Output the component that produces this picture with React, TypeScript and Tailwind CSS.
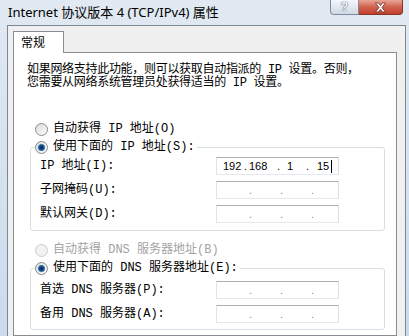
import React from "react";

const simsun = "font-['Liberation_Mono','Noto_Sans_CJK_SC',monospace]";

function Radio({ checked, disabled }: { checked?: boolean; disabled?: boolean }) {
  return (
    <span
      className={`flex h-[13px] w-[13px] shrink-0 items-center justify-center rounded-full border ${
        disabled
          ? "border-[#c9cbcd] bg-[#f2f2f2]"
          : "border-[#8a8c8e] bg-gradient-to-br from-[#dcdcdc] to-[#fbfbfb]"
      }`}
    >
      {checked && (
        <span className="h-[7px] w-[7px] rounded-full bg-[radial-gradient(circle,#0b2548_0%,#174f8c_45%,#6fb2ea_100%)]" />
      )}
    </span>
  );
}

function IpBox({ filled }: { filled?: boolean }) {
  const box =
    "flex h-[18px] w-[123px] shrink-0 items-center border border-[#abadb3] border-l-[#e2e3ea] border-r-[#dbdfe6] border-b-[#e3e9ef] bg-white font-['Liberation_Sans',sans-serif] text-[11px] leading-none";

  if (filled) {
    return (
      <div className={`${box} text-black`}>
        <span className="ml-[6px] w-[21px]">192</span>
        <span className="w-[5px]">.</span>
        <span className="w-[28px]">168</span>
        <span className="w-[10px]">.</span>
        <span className="w-[19px]">1</span>
        <span className="w-[11px]">.</span>
        <span className="w-[14px]">15</span>
        <span className="h-[13px] w-px bg-black" />
      </div>
    );
  }

  return (
    <div className={`${box} text-[#8a8a8a]`}>
      <span className="w-[32px]" />
      <span className="w-[3px] text-center">.</span>
      <span className="w-[28px]" />
      <span className="w-[3px] text-center">.</span>
      <span className="w-[28px]" />
      <span className="w-[3px] text-center">.</span>
      <span className="flex-1" />
    </div>
  );
}

function Row({ label, filled }: { label: string; filled?: boolean }) {
  return (
    <div className="flex h-[18px] items-center pl-[9px]">
      <span className="w-[176px]">{label}</span>
      <IpBox filled={filled} />
    </div>
  );
}

function RadioLine({
  label,
  checked,
  disabled,
}: {
  label: string;
  checked?: boolean;
  disabled?: boolean;
}) {
  return (
    <div className={`flex h-[16px] items-center gap-[5px] ${disabled ? "text-[#a3a3a3]" : "text-black"}`}>
      <Radio checked={checked} disabled={disabled} />
      <span>{label}</span>
    </div>
  );
}

export default function App() {
  return (
    <div className="flex h-[336px] w-[409px] flex-col overflow-hidden bg-gradient-to-b from-[#e1e9f2] to-[#cbdbec]">
      {/* Title bar */}
      <div className="flex h-[25px] shrink-0 items-start justify-between">
        <div className="pl-[8px] pt-[4px] font-['Noto_Sans','Noto_Sans_CJK_SC',sans-serif] text-[13px] leading-[16px] text-black">
          Internet 协议版本 4 (TCP/IPv4) 属性
        </div>
        <div className="mr-[6px] flex">
          <div className="flex h-[15px] w-[29px] items-center justify-center rounded-bl-[4px] border border-t-0 border-[#7d8b9d] bg-gradient-to-b from-[#f4f7fa] to-[#cfd9e4] font-['Liberation_Sans',sans-serif] text-[12px] font-bold leading-none text-[#f7f9fb] [text-shadow:0_0_1px_#3f4f63,0_0_1px_#3f4f63]">
            ?
          </div>
          <div className="flex h-[15px] w-[44px] items-center justify-center rounded-br-[4px] border border-t-0 border-l-0 border-[#8a3327] bg-gradient-to-b from-[#e8a595] via-[#d0614f] to-[#c23f2c]">
            <svg width="13" height="11" viewBox="0 0 13 11">
              <path
                d="M1.5 1 H4.5 L6.5 3.6 L8.5 1 H11.5 L8 5.5 L11.5 10 H8.5 L6.5 7.4 L4.5 10 H1.5 L5 5.5 Z"
                fill="#ffffff"
                stroke="#6b2a21"
                strokeWidth="0.8"
                strokeLinejoin="round"
              />
            </svg>
          </div>
        </div>
      </div>

      {/* Dialog body */}
      <div className="ml-[7px] mr-[3px] flex flex-1 flex-col border-x border-t border-[#7b8896] bg-[#f0f0f0] pl-[5px] pr-[8px] pt-[5px]">
        <div className="relative z-10 -mb-px h-[22px] w-[51px] border border-b-0 border-[#898c95] bg-white pl-[7px] pt-[2px] font-['Noto_Sans_CJK_SC',sans-serif] text-[12px] leading-[16px] text-black">
          常规
        </div>
        <div className={`flex flex-1 flex-col border border-[#898c95] bg-white ${simsun} text-[12px] text-black`}>
          <p className="pl-[13px] pt-[11px] leading-[13px] tracking-[-0.3px]">
            如果网络支持此功能，则可以获取自动指派的 IP 设置。否则，
            <br />
            您需要从网络系统管理员处获得适当的 IP 设置。
          </p>

          <div className="ml-[21px] mt-[31px]">
            <RadioLine label="自动获得 IP 地址(O)" />
          </div>

          <fieldset className="ml-[16px] mr-[11px] mt-[2px] rounded-[3px] border border-[#d5dfe5] pb-[7px]">
            <legend className="ml-[4px] pr-[2px]">
              <RadioLine label="使用下面的 IP 地址(S):" checked />
            </legend>
            <div className="mt-[2px] flex flex-col gap-[6px]">
              <Row label="IP 地址(I):" filled />
              <Row label="子网掩码(U):" />
              <Row label="默认网关(D):" />
            </div>
          </fieldset>

          <div className="ml-[21px] mt-[11px]">
            <RadioLine label="自动获得 DNS 服务器地址(B)" disabled />
          </div>

          <fieldset className="ml-[16px] mr-[11px] mt-[2px] rounded-[3px] border border-[#d5dfe5] pb-[6px]">
            <legend className="ml-[4px] pr-[2px]">
              <RadioLine label="使用下面的 DNS 服务器地址(E):" checked />
            </legend>
            <div className="mt-[5px] flex flex-col gap-[6px]">
              <Row label="首选 DNS 服务器(P):" />
              <Row label="备用 DNS 服务器(A):" />
            </div>
          </fieldset>
        </div>
      </div>
    </div>
  );
}
